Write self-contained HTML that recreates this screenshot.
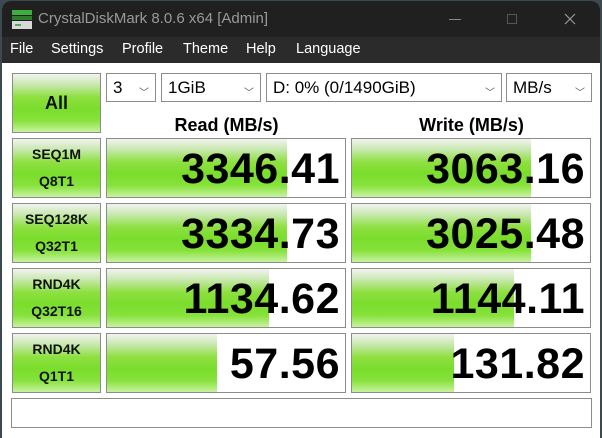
<!DOCTYPE html>
<html><head><meta charset="utf-8"><style>
*{box-sizing:border-box;margin:0;padding:0}
body{width:602px;height:438px;background:#3a4a50;position:relative;overflow:hidden;font-family:"Liberation Sans",sans-serif}
.win{position:absolute;left:2px;top:1px;width:598px;height:437px;background:#fff;border-radius:8px 8px 0 0;overflow:hidden}
.title{position:absolute;left:0;top:0;width:100%;height:36px;background:#202020;color:#9a9a9a;font-size:15px}
.menu{position:absolute;left:0;top:36px;width:100%;height:26px;background:#2b2b2b;color:#fff;font-size:14.5px}
.menu span{position:absolute;top:4px}
.abs{position:absolute}
.g{background:linear-gradient(#f2f4f0 0%,#c8e8b0 18%,#8ee040 40%,#7add2c 60%,#86e23a 80%,#c8f2a0 100%)}
.box{position:absolute;border:1px solid #8c8c8c;background:#fff}
.lab{position:absolute;border:1px solid #8c8c8c;text-align:center;font-weight:bold;font-size:14px;color:#111;line-height:27px;padding-top:2px}
.num{position:absolute;right:5px;top:6px;font-weight:bold;font-size:43px;color:#000;letter-spacing:0.5px}
.fill{position:absolute;left:0;top:0;bottom:0}
.cb{position:absolute;border:1px solid #8c8c8c;background:#fff;height:29px;font-size:17px;line-height:27px;padding-left:6px;color:#000}
.cb i{position:absolute;right:6px;top:6px;font-style:normal;font-size:10px;color:#555}
</style></head><body>
<div class="win">
<div class="title">
<svg class="abs" style="left:9px;top:9px" width="22" height="20"><rect x="1" y="0" width="20" height="5" fill="#3fae3f"/><rect x="1" y="6" width="20" height="4" fill="#2e7d2e"/><rect x="1" y="11" width="20" height="8" fill="#d8d8d8"/><rect x="4" y="14" width="6" height="2" fill="#4caf50"/></svg>
<span class="abs" style="left:36px;top:9px">CrystalDiskMark 8.0.6 x64 [Admin]</span>
<div class="abs" style="left:447px;top:18px;width:12px;height:1px;background:#888"></div>
<div class="abs" style="left:505px;top:13px;width:10px;height:10px;border:1px solid #555"></div>
<svg class="abs" style="left:562px;top:12px" width="12" height="12"><path d="M1 1L11 11M11 1L1 11" stroke="#999" stroke-width="1.2"/></svg>
</div>
<div class="menu">
<span style="left:8px">File</span><span style="left:49px">Settings</span><span style="left:120px">Profile</span><span style="left:181px">Theme</span><span style="left:244px">Help</span><span style="left:294px">Language</span>
</div>
<div class="lab g" style="left:10px;top:72px;width:89px;height:60px;font-size:18px;line-height:58px;padding:0">All</div>
<div class="cb" style="left:104px;top:72px;width:50px">3<i>﹀</i></div>
<div class="cb" style="left:159px;top:72px;width:100px">1GiB<i>﹀</i></div>
<div class="cb" style="left:264px;top:72px;width:236px">D: 0% (0/1490GiB)<i>﹀</i></div>
<div class="cb" style="left:504px;top:72px;width:86px">MB/s<i>﹀</i></div>
<div class="abs" style="left:104px;top:114px;width:241px;text-align:center;font-weight:bold;font-size:18px">Read (MB/s)</div>
<div class="abs" style="left:349px;top:114px;width:241px;text-align:center;font-weight:bold;font-size:18px">Write (MB/s)</div>

<div class="lab g" style="left:10px;top:137px;width:89px;height:60px">SEQ1M<br>Q8T1</div>
<div class="box" style="left:104px;top:137px;width:240px;height:60px"><div class="fill g" style="width:180px"></div><span class="num">3346.41</span></div>
<div class="box" style="left:349px;top:137px;width:240px;height:60px"><div class="fill g" style="width:179px"></div><span class="num">3063.16</span></div>

<div class="lab g" style="left:10px;top:202px;width:89px;height:60px">SEQ128K<br>Q32T1</div>
<div class="box" style="left:104px;top:202px;width:240px;height:60px"><div class="fill g" style="width:180px"></div><span class="num">3334.73</span></div>
<div class="box" style="left:349px;top:202px;width:240px;height:60px"><div class="fill g" style="width:179px"></div><span class="num">3025.48</span></div>

<div class="lab g" style="left:10px;top:267px;width:89px;height:60px">RND4K<br>Q32T16</div>
<div class="box" style="left:104px;top:267px;width:240px;height:60px"><div class="fill g" style="width:162px"></div><span class="num">1134.62</span></div>
<div class="box" style="left:349px;top:267px;width:240px;height:60px"><div class="fill g" style="width:162px"></div><span class="num">1144.11</span></div>

<div class="lab g" style="left:10px;top:332px;width:89px;height:60px">RND4K<br>Q1T1</div>
<div class="box" style="left:104px;top:332px;width:240px;height:60px"><div class="fill g" style="width:110px"></div><span class="num">57.56</span></div>
<div class="box" style="left:349px;top:332px;width:240px;height:60px"><div class="fill g" style="width:102px"></div><span class="num">131.82</span></div>

<div class="box" style="left:9px;top:397px;width:581px;height:30px"></div>
</div>
</body></html>
